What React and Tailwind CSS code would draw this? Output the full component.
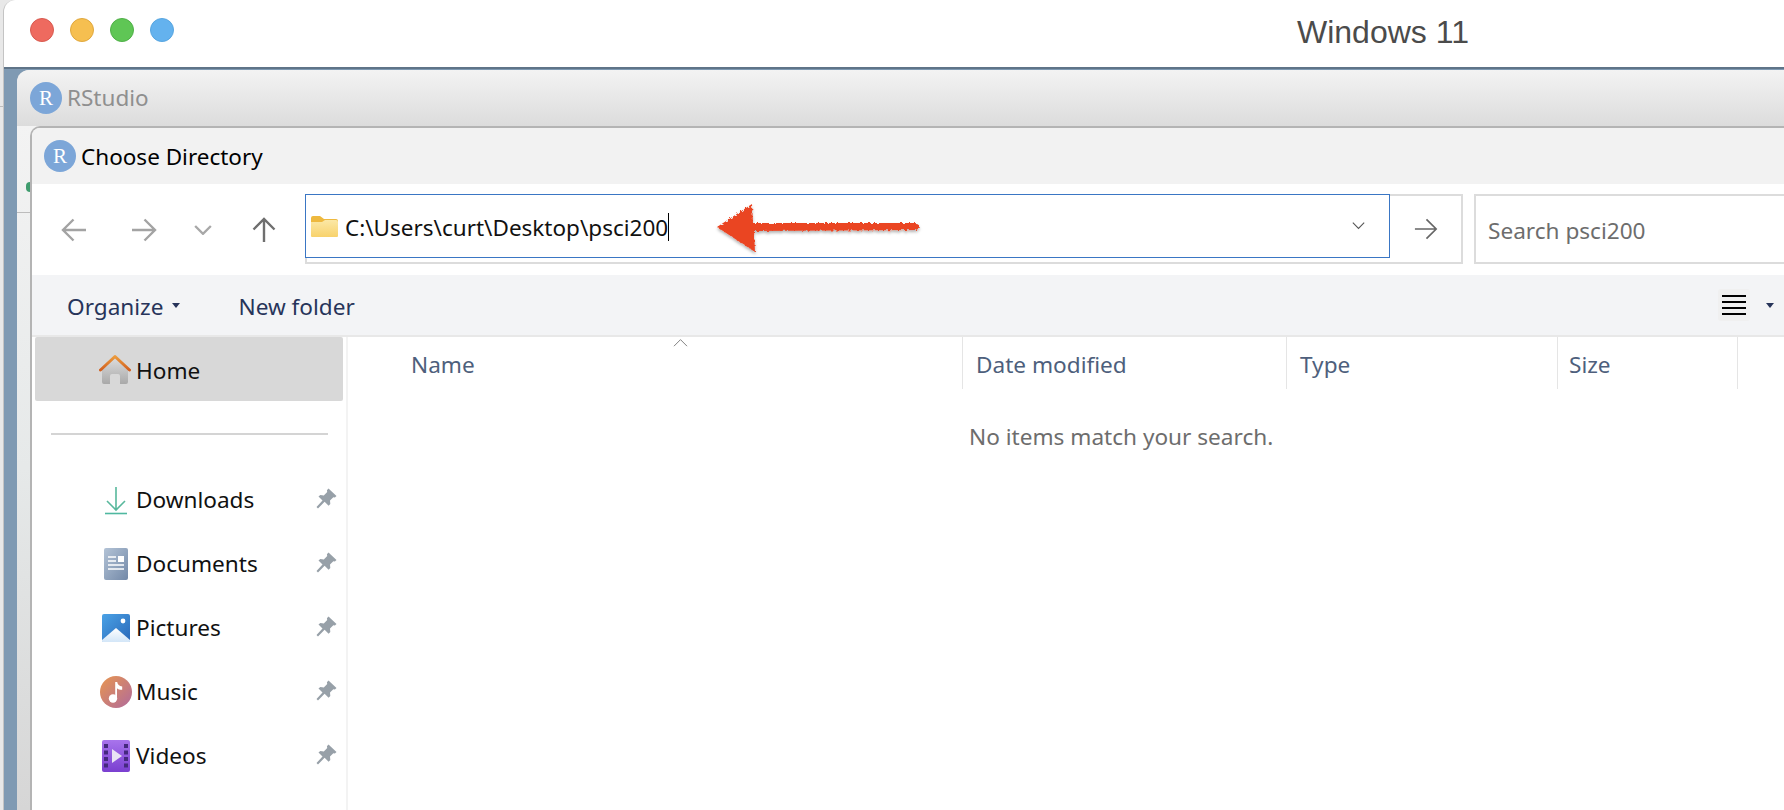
const uiFont = { fontFamily: '"Noto Sans", sans-serif' };

function RLogo() {
    return (
        <div className="w-[32px] h-[32px] rounded-full bg-[#7ca6d8] flex items-center justify-center shrink-0 text-white text-[21px] leading-none font-['Liberation_Serif',serif]">
            R
        </div>
    );
}

function Arrow({ dir = "left", color = "#a3a3a3", size = 26, width = 2.4 }) {
    const rotate = { left: 0, right: 180, up: 90 }[dir];
    return (
        <svg width={size} height={size} viewBox="0 0 26 26" style={{ transform: `rotate(${rotate}deg)` }} fill="none" stroke={color} strokeWidth={width}>
            <path d="M2 13H25M12.5 2.5L2 13l10.5 10.5" />
        </svg>
    );
}

function Chevron({ size = 18, color = "#a8a8a8", width = 2.4, up = false }) {
    return (
        <svg width={size} height={size * 0.6} viewBox="0 0 18 11" fill="none" stroke={color} strokeWidth={width}>
            <path d={up ? "M1 10L9 2l8 8" : "M1 1l8 8 8-8"} />
        </svg>
    );
}

function Caret({ color = "#27345a" }) {
    return (
        <svg width="8" height="5" viewBox="0 0 8 5">
            <path d="M0 0h8L4 5z" fill={color} />
        </svg>
    );
}

function FolderIcon() {
    return (
        <svg width="29" height="23" viewBox="0 0 29 23">
            <defs>
                <linearGradient id="folderBody" x1="0" y1="0" x2="0" y2="1">
                    <stop offset="0" stopColor="#fbe8a6" />
                    <stop offset="1" stopColor="#f8d26c" />
                </linearGradient>
            </defs>
            <path d="M1 3a2 2 0 0 1 2-2h7l4 3h12a2 2 0 0 1 2 2v4H1z" fill="#eeb93f" />
            <path d="M1 7h11l3-2h11a2 2 0 0 1 2 2v14a1 1 0 0 1-1 1H2a1 1 0 0 1-1-1z" fill="url(#folderBody)" />
        </svg>
    );
}

function HomeIcon() {
    return (
        <svg width="32" height="31" viewBox="0 0 32 31">
            <defs>
                <linearGradient id="homeBody" x1="0" y1="0" x2="0" y2="1">
                    <stop offset="0" stopColor="#dcdcdc" />
                    <stop offset="1" stopColor="#a9a9a9" />
                </linearGradient>
                <linearGradient id="homeRoof" x1="0" y1="0" x2="0" y2="1">
                    <stop offset="0" stopColor="#eb9a3c" />
                    <stop offset="1" stopColor="#d2601f" />
                </linearGradient>
            </defs>
            <path d="M3 15L16 4l13 11v13a2 2 0 0 1-2 2h-6v-8a2 2 0 0 0-2-2h-6a2 2 0 0 0-2 2v8H5a2 2 0 0 1-2-2z" fill="url(#homeBody)" />
            <path d="M1.5 16L16 2.5 30.5 16" fill="none" stroke="url(#homeRoof)" strokeWidth="3" strokeLinecap="round" strokeLinejoin="round" />
        </svg>
    );
}

function DownloadsIcon() {
    return (
        <svg width="22" height="29" viewBox="0 0 22 29" fill="none" strokeWidth="1.6">
            <path d="M11 1v23M2 15l9 9 9-9" stroke="#58b89c" />
            <path d="M0 27.5h22" stroke="#4fb8a0" />
        </svg>
    );
}

function DocumentsIcon() {
    return (
        <svg width="24" height="32" viewBox="0 0 24 32">
            <defs>
                <linearGradient id="docBody" x1="0" y1="0" x2="1" y2="1">
                    <stop offset="0" stopColor="#b3c3d6" />
                    <stop offset="1" stopColor="#7389a8" />
                </linearGradient>
            </defs>
            <rect width="24" height="32" rx="2" fill="url(#docBody)" />
            <path d="M4 9h8M4 13h8M4 17h16M4 21h16" stroke="#fff" strokeWidth="1.4" />
            <rect x="14" y="8" width="6" height="6" fill="#fff" />
        </svg>
    );
}

function PicturesIcon() {
    return (
        <svg width="28" height="28" viewBox="0 0 28 28">
            <defs>
                <linearGradient id="picBody" x1="0" y1="0" x2="1" y2="1">
                    <stop offset="0" stopColor="#4aa2e6" />
                    <stop offset="1" stopColor="#2a68b8" />
                </linearGradient>
                <linearGradient id="picHill" x1="0" y1="0" x2="0" y2="1">
                    <stop offset="0" stopColor="#ffffff" />
                    <stop offset="1" stopColor="#d3e6f8" />
                </linearGradient>
            </defs>
            <rect width="28" height="28" rx="2" fill="url(#picBody)" />
            <path d="M0 26L14 14l14 12v1a1 1 0 0 1-1 1H1a1 1 0 0 1-1-1z" fill="url(#picHill)" />
            <circle cx="21" cy="7" r="2.4" fill="#fff" />
        </svg>
    );
}

function MusicIcon() {
    return (
        <svg width="32" height="32" viewBox="0 0 32 32">
            <defs>
                <linearGradient id="musicBody" x1="0" y1="0" x2="1" y2="1">
                    <stop offset="0" stopColor="#e8964f" />
                    <stop offset="1" stopColor="#b06a9c" />
                </linearGradient>
            </defs>
            <circle cx="16" cy="16" r="16" fill="url(#musicBody)" />
            <circle cx="13" cy="22.5" r="4.2" fill="#fff" />
            <path d="M15.2 22.5V6h2c.4 2.8 2 4 5 4.4v3.4c-2.4 0-4.2-.6-5.2-1.6V22.5z" fill="#fff" />
        </svg>
    );
}

function VideosIcon() {
    const holes = [3, 9.5, 16, 22.5];
    return (
        <svg width="28" height="32" viewBox="0 0 28 32">
            <defs>
                <linearGradient id="vidBody" x1="0" y1="0" x2="0" y2="1">
                    <stop offset="0" stopColor="#a874ec" />
                    <stop offset="1" stopColor="#7a3fd0" />
                </linearGradient>
            </defs>
            <rect width="28" height="32" rx="2" fill="url(#vidBody)" />
            {holes.map((y) => (
                <g key={y} fill="#45297e">
                    <rect x="2" y={y + 1} width="4" height="4" />
                    <rect x="22" y={y + 1} width="4" height="4" />
                </g>
            ))}
            <path d="M10 9l10 7-10 7z" fill="#e9e4f4" />
        </svg>
    );
}

function PinIcon() {
    return (
        <svg width="21" height="21" viewBox="0 0 21 21">
            <path d="M12.5 0.5L20.5 8l-1.6 1.5-1.6-.3-3.3 3.3.3 3.6-1.7 1.6-4-4L2 20.5l-1.5-1.5 6-6.5-4-4L4.3 7l3.5.4 3.4-3.3-.3-1.9z" fill="#97a0a8" />
        </svg>
    );
}

function SideRow({ icon, label }) {
    return (
        <div className="h-[64px] flex items-center pl-[68px] pr-[9px]">
            <div className="w-[32px] flex justify-center shrink-0">{icon}</div>
            <span className="ml-[4px] text-[22.6px] text-[#111]">{label}</span>
            <div className="ml-auto -mt-[4px]">
                <PinIcon />
            </div>
        </div>
    );
}

function HeaderCell({ label, width, className = "" }) {
    return (
        <div className={`h-[52px] pt-[4px] flex items-center border-r border-[#e5e5e5] shrink-0 ${className}`} style={{ width }}>
            <span className="text-[22.6px] text-[#4e5f7c]">{label}</span>
        </div>
    );
}

export default function App() {
    return (
        <div className="w-[1784px] h-[810px] overflow-hidden bg-[#e8e8e8] relative" style={uiFont}>
            <div className="absolute left-0 top-[106px] w-[3px] h-[1px] bg-[#bdbdbd]" />
            <div className="absolute left-[3px] top-0 w-[1781px] h-[810px] flex flex-col rounded-tl-[12px] border-l border-[#c4c4c4] bg-white overflow-hidden">
                {/* top bar with the window buttons */}
                <div className="h-[69px] shrink-0 flex items-center pl-[26px] border-b-2 border-[#5f7488]">
                    <div className="flex gap-[16px] -mt-[7px]">
                        <div className="w-[24px] h-[24px] rounded-full bg-[#ee6a5f] border border-[#d85a50]" />
                        <div className="w-[24px] h-[24px] rounded-full bg-[#f6bf50] border border-[#e0a83e]" />
                        <div className="w-[24px] h-[24px] rounded-full bg-[#5fc655] border border-[#50b048]" />
                        <div className="w-[24px] h-[24px] rounded-full bg-[#64b2ee] border border-[#58a6e0]" />
                    </div>
                    <span className="ml-[1123px] -mt-[3px] text-[32px] text-[#4b4b4b] font-['Liberation_Sans',sans-serif]">Windows 11</span>
                </div>

                {/* desktop behind the windows */}
                <div className="flex-1 min-h-0 bg-[#7f9ab3] pl-[13px] pt-[1px]">
                    <div className="h-full rounded-tl-[12px] overflow-hidden flex flex-col bg-[#d8d8d8]">
                        <div className="h-[56px] shrink-0 flex items-center pl-[13px] bg-gradient-to-b from-[#f3f3f3] to-[#dcdcdc]">
                            <RLogo />
                            <span className="ml-[5px] text-[22.5px] text-[#8f8f8f]">RStudio</span>
                        </div>

                        <div className="flex-1 min-h-0 pl-[13px] bg-gradient-to-b from-[#f3f3f3] via-[#e6e9e9] to-[#d6d6d6] relative">
                            <div className="absolute left-[9px] top-[56px] w-[4px] h-[10px] rounded-l-full bg-[#3f9c6e]" />
                            <div className="absolute left-0 top-[86px] w-[13px] h-[1px] bg-[#bcbcbc]" />

                            {/* dialog */}
                            <div className="h-full rounded-tl-[10px] border-l-2 border-t-2 border-[#b4b4b4] overflow-hidden flex flex-col bg-white">
                                <div className="h-[56px] shrink-0 flex items-center pl-[12px] bg-[#f2f2f2]">
                                    <RLogo />
                                    <span className="ml-[5px] pt-[2px] text-[22.5px] text-black">Choose Directory</span>
                                </div>

                                <div className="h-[91px] shrink-0 flex pt-[10px] relative">
                                    <div className="w-[29px]" />
                                    <div className="w-[26px] h-[70px] pt-[2px] flex items-center"><Arrow dir="left" /></div>
                                    <div className="w-[44px]" />
                                    <div className="w-[26px] h-[70px] pt-[2px] flex items-center"><Arrow dir="right" /></div>
                                    <div className="w-[37px]" />
                                    <div className="w-[18px] h-[70px] pt-[2px] flex items-center"><Chevron /></div>
                                    <div className="w-[39px]" />
                                    <div className="w-[26px] h-[70px] pt-[2px] flex items-center"><Arrow dir="up" color="#6f6f6f" /></div>
                                    <div className="w-[28px]" />

                                    {/* address box */}
                                    <div className="w-[1158px] h-[70px] border-2 border-[#dcdcdc] flex shrink-0">
                                        <div className="w-[1085px] h-[64px] -mt-[2px] -ml-[2px] border-[1.5px] border-[#3a76c4] bg-white flex items-center pl-[4px] shrink-0">
                                            <FolderIcon />
                                            <span className="ml-[6px] pt-[4px] text-[22.5px] text-[#111] leading-none">C:\Users\curt\Desktop\psci200</span>
                                            <div className="w-px h-[28px] mt-[2px] bg-black" />
                                            <div className="ml-auto mr-[24px]">
                                                <Chevron size={13} color="#555" width={1.5} />
                                            </div>
                                        </div>
                                        <div className="flex-1 flex items-center justify-center">
                                            <Arrow dir="right" color="#666" size={24} width={1.8} />
                                        </div>
                                    </div>

                                    {/* search box */}
                                    <div className="flex-1 h-[70px] ml-[11px] border-2 border-r-0 border-[#dcdcdc] flex items-center pl-[12px] pt-[3px]">
                                        <span className="text-[22.6px] text-[#6d6d6d]">Search psci200</span>
                                    </div>

                                    {/* hand-drawn red arrow on top of the address */}
                                    <svg className="absolute left-[682px] top-[16px]" width="212" height="60" viewBox="0 0 212 60">
                                        <defs>
                                            <filter id="rough" x="-10%" y="-30%" width="120%" height="160%">
                                                <feTurbulence type="fractalNoise" baseFrequency="0.35" numOctaves="2" seed="4" result="noise" />
                                                <feDisplacementMap in="SourceGraphic" in2="noise" scale="4" result="rough" />
                                                <feDropShadow in="rough" dx="0" dy="2" stdDeviation="1.6" floodColor="#000" floodOpacity="0.3" />
                                            </filter>
                                        </defs>
                                        <path d="M3 27L38 4l1 19 162 0c5 0 5 7 0 7L40 31l1 21z" fill="#ea4423" filter="url(#rough)" />
                                    </svg>
                                </div>

                                <div className="h-[62px] shrink-0 bg-[#f3f4f6] border-b-2 border-[#e8e8e8] flex items-center pl-[35px] text-[#27345a]">
                                    <span className="text-[22.6px] pt-[3px]">Organize</span>
                                    <div className="ml-[9px]"><Caret /></div>
                                    <span className="ml-[58px] text-[22.6px] pt-[3px]">New folder</span>
                                    <div className="ml-auto w-[32px] h-[32px] rounded-[3px] bg-[#f0f0f0] flex flex-col justify-center gap-[4px] px-[4px]">
                                        <div className="h-[2px] bg-black" />
                                        <div className="h-[2px] bg-black" />
                                        <div className="h-[2px] bg-black" />
                                        <div className="h-[2px] bg-black" />
                                    </div>
                                    <div className="ml-[16px] mr-[10px]"><Caret /></div>
                                </div>

                                <div className="flex-1 min-h-0 flex">
                                    {/* sidebar */}
                                    <div className="w-[316px] shrink-0 border-r-2 border-[#f3f3f3] flex flex-col">
                                        <div className="h-[64px] ml-[3px] mr-[3px] rounded-[2px] bg-[#d8d8d8] flex items-center pl-[64px] shrink-0">
                                            <div className="w-[32px] flex justify-center"><HomeIcon /></div>
                                            <span className="ml-[5px] pt-[4px] text-[22.6px] text-[#111]">Home</span>
                                        </div>
                                        <div className="h-[2px] mt-[32px] mb-[33px] ml-[19px] mr-[18px] bg-[#d4d4d4] shrink-0" />
                                        <SideRow icon={<DownloadsIcon />} label="Downloads" />
                                        <SideRow icon={<DocumentsIcon />} label="Documents" />
                                        <SideRow icon={<PicturesIcon />} label="Pictures" />
                                        <SideRow icon={<MusicIcon />} label="Music" />
                                        <SideRow icon={<VideosIcon />} label="Videos" />
                                    </div>

                                    {/* file list */}
                                    <div className="flex-1 min-w-0 relative">
                                        <div className="flex">
                                            <HeaderCell label="Name" width={615} className="pl-[63px]" />
                                            <HeaderCell label="Date modified" width={324} className="pl-[13px]" />
                                            <HeaderCell label="Type" width={271} className="pl-[13px]" />
                                            <HeaderCell label="Size" width={180} className="pl-[11px]" />
                                        </div>
                                        <div className="absolute left-[325px] top-[1px]">
                                            <Chevron size={15} color="#666" width={1} up />
                                        </div>
                                        <p className="mt-[31px] pl-[621px] text-[22.6px] text-[#6d6d6d]">No items match your search.</p>
                                    </div>
                                </div>
                            </div>
                        </div>
                    </div>
                </div>
            </div>
        </div>
    );
}
